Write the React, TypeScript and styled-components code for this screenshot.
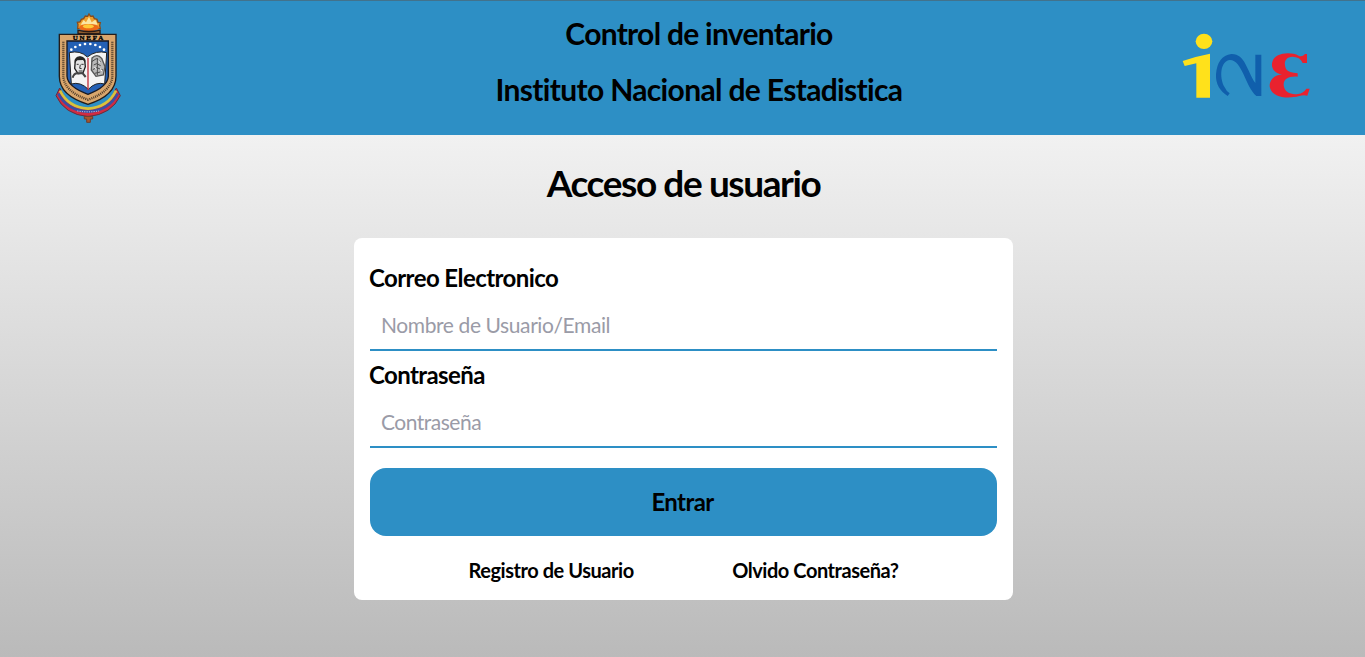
import React from 'react';
import styled, { createGlobalStyle } from 'styled-components';

const blue = '#2d8fc5';

const GlobalStyle = createGlobalStyle`
  * { box-sizing: border-box; }
  body { margin: 0; font-family: Lato, "Open Sans", sans-serif; color: #000; }
  h1, h2, p { margin: 0; }
`;

const Page = styled.div`
  display: flex;
  flex-direction: column;
  height: 657px;
  overflow: hidden;
  background: linear-gradient(#f1f1f1 135px, #bababa);
`;

const Header = styled.header`
  display: flex;
  justify-content: space-between;
  align-items: flex-start;
  height: 135px;
  padding: 7px 45px 0 48px;
  background: ${blue};
  border-top: 1px solid #42728c;
`;

const Emblem = styled.svg`
  width: 80px;
  height: 119px;
`;

const Logo = styled.svg`
  width: 150px;
  height: 85px;
  margin-top: 17px;
`;

const Heading = styled.div`
  display: flex;
  flex-direction: column;
  align-items: center;
  gap: 20px;
  padding: 7px 0 0 100px;
`;

const Line = styled.p<{ $spacing: number }>`
  font-size: 30px;
  line-height: 36px;
  font-weight: 700;
  letter-spacing: ${p => p.$spacing}px;
  white-space: nowrap;
`;

const Main = styled.main`
  display: flex;
  flex-direction: column;
  align-items: center;
  padding-left: 2px;
`;

const Title = styled.h1`
  margin: 26px 0 32.5px;
  font-size: 37px;
  line-height: 44px;
  font-weight: 700;
  letter-spacing: -1.4px;
`;

const Card = styled.form`
  display: flex;
  flex-direction: column;
  width: 659px;
  height: 362px;
  padding: 22px 16px 0;
  border-radius: 8px;
  background: #fff;
`;

const Field = styled.div`
  display: flex;
  flex-direction: column;
  height: 97px;
`;

const Label = styled.label<{ $spacing: number }>`
  margin-left: -1px;
  font-size: 24px;
  line-height: 36px;
  font-weight: 700;
  letter-spacing: ${p => p.$spacing}px;
`;

const Input = styled.input<{ $spacing: number }>`
  height: 55px;
  padding: 5px 11px 0;
  border: 0;
  border-bottom: 2px solid ${blue};
  outline: 0;
  background: transparent;
  font: 400 21px/30px Lato, sans-serif;
  letter-spacing: ${p => p.$spacing}px;
  &::placeholder { color: #9a9ba7; opacity: 1; }
`;

const Submit = styled.button`
  height: 68px;
  margin-top: 14px;
  padding: 0 2px 0 0;
  border: 0;
  border-radius: 16px;
  background: ${blue};
  color: #000;
  font: 700 24px/36px Lato, sans-serif;
  letter-spacing: -0.6px;
`;

const Links = styled.nav`
  display: flex;
  justify-content: space-evenly;
  padding-top: 19px;
`;

const LinkText = styled.a<{ $spacing: number }>`
  font-size: 20px;
  line-height: 30px;
  font-weight: 700;
  letter-spacing: ${p => p.$spacing}px;
`;

function University() {
  return (
    <Emblem viewBox="0 0 240 357">
      <path d="M89 62 90 50 88 43 96 42 100 34 107 32 112 24 119 25 123 18 128 25 135 24 139 32 147 34 150 43 157 44 155 52 157 62Z" fill="#f0a02c" stroke="#8b4b1a" strokeWidth="4" />
      <path d="M98 50 107 36 114 43 123 27 131 43 142 35 149 50Z" fill="#fbe6a4" />
      <ellipse cx="123" cy="59" rx="30" ry="11" fill="#ed6a18" />
      <ellipse cx="121" cy="55" rx="17" ry="6" fill="#ffc938" />
      <path d="M90 67q33 7 66 0v9H90Z" fill="#b07538" stroke="#2b1b15" strokeWidth="4" />
      <path d="M35 240Q57 300 120 304Q183 300 205 240L217 263Q191 319 120 326Q49 319 24 263Z" fill="#d22b42" stroke="#5d3242" strokeWidth="3" />
      <path d="M36 248Q60 298 120 302Q180 298 204 248" fill="none" stroke="#d8c23d" strokeWidth="8" />
      <path d="M31 257Q58 308 120 311Q182 308 209 257" fill="none" stroke="#3a4fa3" strokeWidth="8" />
      <path d="M88 309q32 5 65 0" stroke="#dfe2f5" strokeWidth="3" strokeDasharray="3 4" fill="none" />
      <path d="M34 79H204V205Q204 263 120 289Q34 263 34 205Z" fill="#d9a66c" stroke="#241d1a" strokeWidth="4" />
      <path d="M46 101V205Q49 251 120 275Q190 251 193 205V101" fill="none" stroke="#4a3827" strokeWidth="7" strokeDasharray="3 3" />
      <text x="120" y="96" textAnchor="middle" fontFamily="Liberation Serif, serif" fontSize="21" fontWeight="700" textLength="92" stroke="#000" strokeWidth="1">UNEFA</text>
      <path d="M57 99H181V205Q179 237 120 259Q59 237 57 205Z" fill="#2460b4" stroke="#171923" strokeWidth="4" />
      <g fill="#fff">
        <circle cx="70" cy="125" r="4" />
        <circle cx="82" cy="117" r="4" />
        <circle cx="96" cy="111" r="4" />
        <circle cx="111" cy="108" r="4" />
        <circle cx="127" cy="108" r="4" />
        <circle cx="142" cy="111" r="4" />
        <circle cx="156" cy="117" r="4" />
        <circle cx="168" cy="125" r="4" />
      </g>
      <path d="M64 134Q96 126 118 147Q144 126 176 134L170 228Q143 220 121 244Q97 220 70 228Z" fill="#f4f4f4" stroke="#222" strokeWidth="3" />
      <path d="M82 156q13-16 28 0l2 20-7 19-15 2-10-16Z" fill="#e4e4e4" stroke="#1f1f1f" strokeWidth="4" />
      <path d="M80 165Q79 143 98 145Q114 147 112 164L105 156 88 157Z" fill="#252525" />
      <path d="M86 169h6m8 0h7m-10 1-2 11 6 1m-9 7h12" fill="none" stroke="#333" strokeWidth="3" />
      <path d="M74 209Q78 194 91 196L104 196 113 207" fill="none" stroke="#444" strokeWidth="6" />
      <path d="M132 150q15-15 29 1l10 25-5 25-22 4-14-19Z" fill="#b8b8b8" stroke="#555" strokeWidth="4" />
      <path d="M131 161l14-9 14 11M137 171l9-4 12 6M134 185l12-6 19 7M140 196l17-4M148 150v52" fill="none" stroke="#4b4b4b" strokeWidth="3" />
      <path d="M151 157l6 8m-17 12 5 7m12-3 4 8" stroke="#fff" strokeWidth="3" />
      <path d="M120 150V246" stroke="#c3313c" strokeWidth="4" />
      <path d="M109 325h25v8h-7v10h-11v-10h-7Z" fill="#a8562c" stroke="#693e32" strokeWidth="3" />
    </Emblem>
  );
}

function InstituteLogo() {
  return (
    <Logo viewBox="0 0 450 255">
      <ellipse cx="102" cy="49" rx="25" ry="23" fill="#ffe11b" />
      <path d="M38 108Q77 94 120 86V218H79V115L44 123Z" fill="#ffe11b" />
      <path d="M173 213Q136 190 138 148Q142 93 184 87C226 86 230 137 256 174V89H274V213H259C225 183 217 106 180 105C151 107 147 158 164 187Q169 199 179 205Z" fill="#105fac" />
      <path d="M411 114H398Q390 95 367 95C345 96 340 114 348 132Q356 143 383 145V155C353 153 340 163 341 181C343 202 363 210 384 207Q401 204 409 191H419L412 212Q401 209 388 213C346 224 303 214 299 184C298 164 314 151 336 148C313 145 302 128 307 111C314 83 361 79 386 92Q396 97 405 87H411Z" fill="#e9222e" />
    </Logo>
  );
}

export default function App() {
  return (
    <Page>
      <GlobalStyle />
      <Header>
        <University />
        <Heading>
          <Line $spacing={-0.72}>Control de inventario</Line>
          <Line $spacing={-0.66}>Instituto Nacional de Estadistica</Line>
        </Heading>
        <InstituteLogo />
      </Header>
      <Main>
        <Title>Acceso de usuario</Title>
        <Card>
          <Field>
            <Label $spacing={-0.58}>Correo Electronico</Label>
            <Input $spacing={-0.4} placeholder="Nombre de Usuario/Email" />
          </Field>
          <Field>
            <Label $spacing={-0.6}>Contraseña</Label>
            <Input $spacing={-0.5} type="password" placeholder="Contraseña" />
          </Field>
          <Submit type="button">Entrar</Submit>
          <Links>
            <LinkText $spacing={-0.45}>Registro de Usuario</LinkText>
            <LinkText $spacing={-0.45}>Olvido Contraseña?</LinkText>
          </Links>
        </Card>
      </Main>
    </Page>
  );
}
